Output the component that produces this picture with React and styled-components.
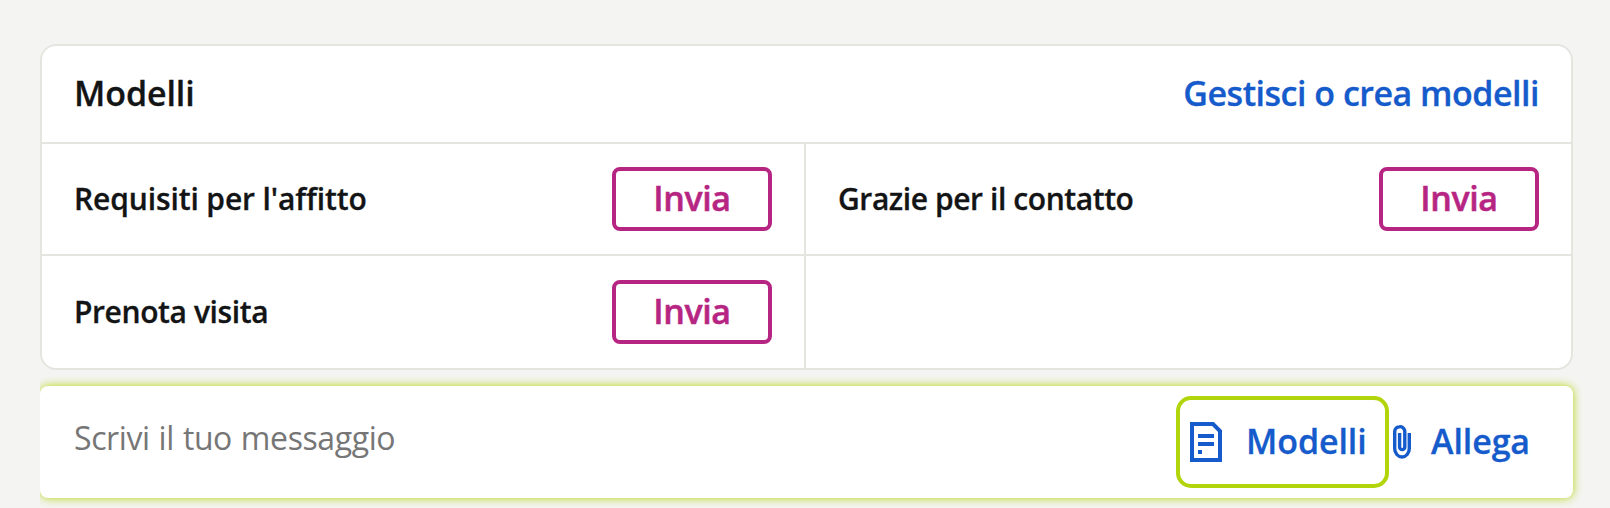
import React from 'react';
import styled, { createGlobalStyle } from 'styled-components';

const GlobalStyle = createGlobalStyle`
  * {
    box-sizing: border-box;
  }

  body {
    margin: 0;
    background-color: #f4f4f2;
    color: #131415;
    font-family: "Open Sans", "Noto Sans", sans-serif;
    font-variant-ligatures: none;
  }
`;

const Page = styled.main`
  height: 508px;
  padding: 44px 37px 0 40px;
  overflow: hidden;
`;

const Card = styled.section`
  height: 326px;
  border: 2px solid #e5e5e0;
  border-radius: 16px;
  background-color: #fff;
  overflow: hidden;
`;

const CardHeader = styled.header`
  display: flex;
  justify-content: space-between;
  align-items: center;
  height: 98px;
  padding: 0 32px 2px;
  border-bottom: 2px solid #e5e5e0;
`;

const Title = styled.h2`
  margin: 0;
  font-size: 34px;
  font-weight: 600;
  line-height: 48px;
  letter-spacing: -0.1px;
  -webkit-text-stroke: 0.3px;
`;

const Link = styled.a`
  color: #155bcb;
  font-size: 34px;
  font-weight: 600;
  line-height: 48px;
  letter-spacing: -0.5px;
  -webkit-text-stroke: 0.3px;
`;

const Grid = styled.div`
  display: grid;
  grid-template-columns: 764px 1fr;
  grid-template-rows: 112px 112px;
`;

const Cell = styled.div`
  display: flex;
  justify-content: space-between;
  align-items: flex-start;
  padding: ${p => (p.$last ? 24 : 23)}px 32px 0;
  border-right: ${p => (p.$left ? '2px solid #e5e5e0' : 'none')};
  border-bottom: ${p => (p.$last ? 'none' : '2px solid #e5e5e0')};
`;

const Name = styled.span`
  font-size: 30px;
  font-weight: 600;
  line-height: 64px;
  letter-spacing: ${p => p.$spacing}px;
  -webkit-text-stroke: 0.3px;
`;

const SendButton = styled.button`
  width: 160px;
  height: 64px;
  padding: 0 0 2px;
  border: 4px solid #b72582;
  border-radius: 8px;
  background: none;
  color: #b72582;
  font-family: inherit;
  font-size: 34px;
  font-weight: 600;
  line-height: 54px;
  letter-spacing: -0.4px;
  -webkit-text-stroke: 0.5px;
`;

// the glow is cut off on the left side
const Composer = styled.form`
  display: flex;
  align-items: flex-start;
  height: 112px;
  margin-top: 16px;
  border-radius: 8px;
  background-color: #fff;
  box-shadow: 0 0 10px #b2d40a;
  clip-path: inset(-20px -20px -20px 0);
`;

const MessageInput = styled.input`
  flex: 1;
  min-width: 0;
  height: 102px;
  padding: 0 0 0 34px;
  border: none;
  background: none;
  font-family: inherit;
  font-size: 32px;
  letter-spacing: -0.4px;
  word-spacing: 1px;

  &::placeholder {
    color: #767676;
    opacity: 1;
  }
`;

const ToolButton = styled.button`
  display: flex;
  align-items: center;
  flex: none;
  height: 92px;
  margin-top: 10px;
  padding: 0;
  border: none;
  background: none;
  color: #155bcb;
  font-family: inherit;
  font-size: 34px;
  font-weight: 600;
  line-height: 48px;
  letter-spacing: -0.1px;
  -webkit-text-stroke: 0.3px;
`;

const TemplatesButton = styled(ToolButton)`
  width: 213px;
  margin-right: 4px;
  padding-left: 10px;
  border: 4px solid #b2d40a;
  border-radius: 15px;
`;

const AttachButton = styled(ToolButton)`
  width: 180px;
`;

const Label = styled.span`
  margin-left: ${p => p.$gap}px;
  padding-bottom: 2px;
`;

const DocumentIcon = () => (
  <svg width="32" height="40" viewBox="0 0 32 40" fill="none" stroke="currentColor" strokeWidth="4">
    <path d="M2 2H23L30 9V38H2Z" />
    <path d="M8 14H24M8 22H24M8 30H12" />
  </svg>
);

const ClipIcon = () => (
  <svg width="18" height="34" viewBox="0 0 18 34" fill="none" stroke="currentColor" strokeWidth="3.4">
    <path d="M16.3 8V23.5A7.3 8.5 0 0 1 1.7 23.5V6.5A4.8 4.8 0 0 1 6.5 1.7A4.8 4.8 0 0 1 11.8 6.5V22A2.6 2.6 0 0 1 6.6 22V8" />
  </svg>
);

const templates = [
  { name: "Requisiti per l'affitto", spacing: -0.12 },
  { name: 'Grazie per il contatto', spacing: -0.42 },
  { name: 'Prenota visita', spacing: -0.4 },
];

const App = () => (
  <>
    <GlobalStyle />
    <Page>
      <Card>
        <CardHeader>
          <Title>Modelli</Title>
          <Link>Gestisci o crea modelli</Link>
        </CardHeader>
        <Grid>
          {templates.map((item, i) => (
            <Cell key={item.name} $left={i % 2 === 0} $last={i > 1}>
              <Name $spacing={item.spacing}>{item.name}</Name>
              <SendButton type="button">Invia</SendButton>
            </Cell>
          ))}
        </Grid>
      </Card>
      <Composer>
        <MessageInput placeholder="Scrivi il tuo messaggio" />
        <TemplatesButton type="button">
          <DocumentIcon />
          <Label $gap={24}>Modelli</Label>
        </TemplatesButton>
        <AttachButton type="button">
          <ClipIcon />
          <Label $gap={20}>Allega</Label>
        </AttachButton>
      </Composer>
    </Page>
  </>
);

export default App;
